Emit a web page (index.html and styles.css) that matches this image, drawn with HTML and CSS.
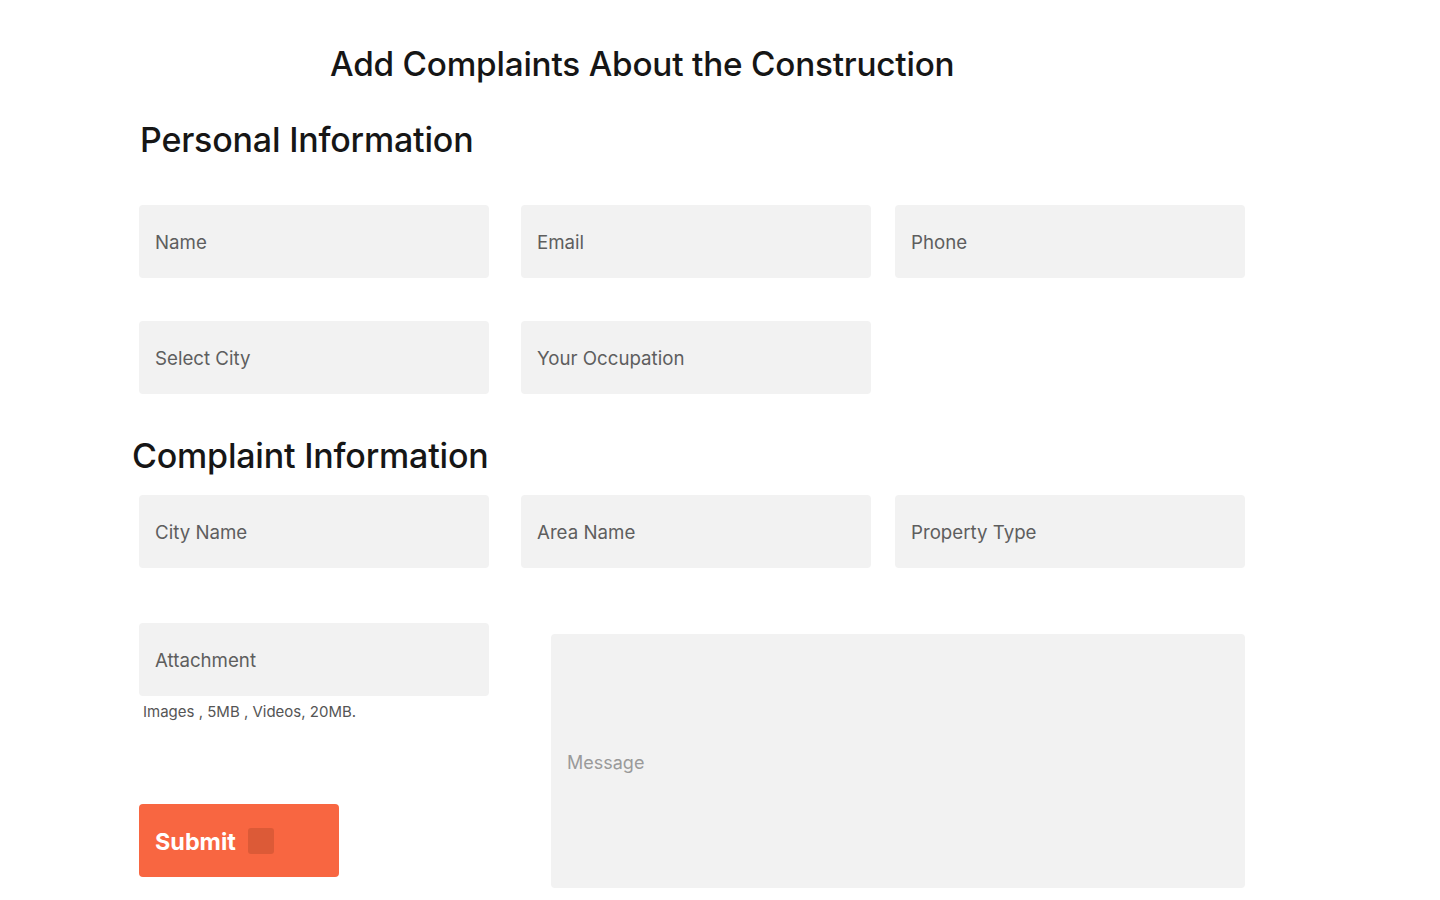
FILE: index.html
```html
<!DOCTYPE html>
<html lang="en">
<head>
<meta charset="utf-8">
<title>Add Complaints About the Construction</title>
<link rel="stylesheet" href="styles.css">
</head>
<body>
<main class="page">
  <h1 class="title">Add Complaints About the Construction</h1>
  <form class="form">
    <h2 class="section-title personal">Personal Information</h2>
    <div class="grid">
      <div class="field">Name</div>
      <div class="field">Email</div>
      <div class="field">Phone</div>
      <div class="field">Select City</div>
      <div class="field">Your Occupation</div>
    </div>
    <h2 class="section-title complaint">Complaint Information</h2>
    <div class="grid">
      <div class="field">City Name</div>
      <div class="field">Area Name</div>
      <div class="field">Property Type</div>
    </div>
    <div class="bottom">
      <div class="left">
        <div class="field">Attachment</div>
        <p class="hint">Images , 5MB , Videos, 20MB.</p>
        <button type="button" class="submit">Submit <span class="submit-box"></span></button>
      </div>
      <div class="message">Message</div>
    </div>
  </form>
</main>
</body>
</html>
```

FILE: styles.css
```css
* { box-sizing: border-box; }
html, body { margin: 0; padding: 0; background: #ffffff; }
body {
  font-family: Inter, "Noto Sans", "Liberation Sans", sans-serif;
  color: #161616;
}
.page {
  width: 1440px;
  padding: 0 0 0 139px;
}
.title {
  margin: 0;
  padding: 42px 0 0 191px;
  font-size: 33.3px;
  line-height: 44px;
  font-weight: 500;
  letter-spacing: -0.2px;
}
.section-title {
  margin: 0;
  font-size: 34px;
  line-height: 44px;
  font-weight: 500;
  letter-spacing: -0.2px;
}
.personal { padding: 32px 0 0 1px; margin-bottom: 43px; }
.complaint { padding: 40px 0 0 0; margin-left: -7px; margin-bottom: 17px; }
.grid {
  display: grid;
  grid-template-columns: 382px 374px 350px;
  row-gap: 43px;
}
.field {
  width: 350px;
  height: 73px;
  background: #f2f2f2;
  border-radius: 4px;
  display: flex;
  align-items: center;
  padding: 2px 0 0 16px;
  font-size: 18.7px;
  color: #5e5e5e;
}
.bottom {
  display: grid;
  grid-template-columns: 412px 694px;
  margin-top: 55px;
}
.left { display: flex; flex-direction: column; }
.hint {
  margin: 7px 0 0 4px;
  font-size: 15px;
  line-height: 18px;
  color: #555555;
}
.submit {
  margin-top: 83px;
  width: 200px;
  height: 73px;
  border: 0;
  border-radius: 4px;
  background: #f86641;
  color: #ffffff;
  font-family: inherit;
  font-size: 23.4px;
  font-weight: 700;
  display: flex;
  align-items: center;
  padding: 2px 0 0 16px;
  gap: 12px;
  cursor: pointer;
}
.submit-box {
  width: 26px;
  height: 26px;
  border-radius: 3px;
  background: #dc5a37;
  margin-top: -2px;
}
.message {
  margin-top: 11px;
  height: 254px;
  background: #f2f2f2;
  border-radius: 4px;
  display: flex;
  align-items: center;
  padding: 2px 0 0 16px;
  font-size: 18px;
  color: #9a9a9a;
}
```
